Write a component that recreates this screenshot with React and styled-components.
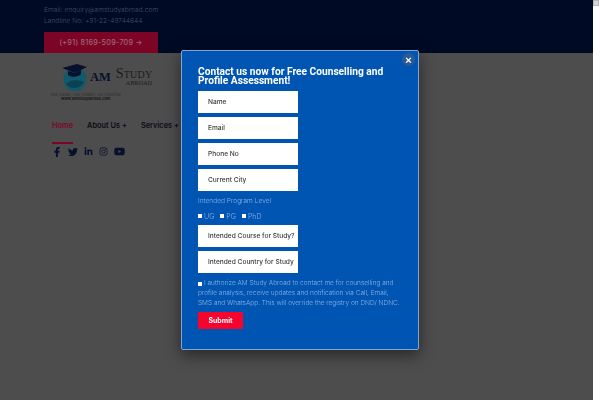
import styled, { createGlobalStyle } from 'styled-components';
import { FaFacebookF, FaTwitter, FaLinkedinIn, FaInstagram, FaYoutube } from 'react-icons/fa';

export default function App () {
  return (
    <>
      <GlobalStyle />
      <Page>
        <TopBar>
          <TopLine>Email: enquiry@amstudyabroad.com</TopLine>
          <TopLine>Landline No: +91-22-49744644</TopLine>
          <CallButton>(+91) 8169-509-709 →</CallButton>
        </TopBar>
        <SiteHeader>
          <Logo>
            <LogoRow>
              <svg width="26" height="29" viewBox="0 0 26 29">
                <circle cx="13" cy="16.5" r="11.5" fill="#0f5a6c" />
                <path d="M4 21c4-4 11-5 18-2-4 7-13 8-18 2z" fill="#0a4250" />
                <path d="M0 5l15-4 10 3-12 6z" fill="#07102c" />
                <path d="M6 8v4c4 3 10 2 13-1V7l-6 3z" fill="#07102c" />
              </svg>
              <LogoAm>AM</LogoAm>
              <LogoStudy>
                <span>Study</span>
                <small>Abroad</small>
              </LogoStudy>
            </LogoRow>
            <LogoTag>Your Career, Your Dreams, Our Expertise</LogoTag>
            <LogoUrl>www.amstudyabroad.com</LogoUrl>
          </Logo>
          <Nav>
            <NavItem $active>Home</NavItem>
            <NavItem>About Us +</NavItem>
            <NavItem>Services +</NavItem>
          </Nav>
          <Socials>
            <FaFacebookF size={10} />
            <FaTwitter size={10} />
            <FaLinkedinIn size={9} />
            <FaInstagram size={9} />
            <FaYoutube size={11} />
          </Socials>
        </SiteHeader>
      </Page>
      <Scrollbar><ScrollArrow /></Scrollbar>
      <Modal>
        <CloseButton>×</CloseButton>
        <Title>Contact us now for Free Counselling and Profile Assessment!</Title>
        <Form>
          <Field placeholder="Name" />
          <Field placeholder="Email" />
          <Field placeholder="Phone No" />
          <Field placeholder="Current City" />
          <Label>Intended Program Level</Label>
          <Checks>
            <Check><Box />UG</Check>
            <Check><Box />PG</Check>
            <Check><Box />PhD</Check>
          </Checks>
          <Field placeholder="Intended Course for Study?" />
          <Field placeholder="Intended Country for Study" />
          <Consent>
            <Box />I authorize AM Study Abroad to contact me for counselling and
            profile analysis, receive updates and notification via Call, Email, SMS
            and WhatsApp. This will override the registry on DND/ NDNC.
          </Consent>
          <Submit>Submit</Submit>
        </Form>
      </Modal>
    </>
  );
}

const GlobalStyle = createGlobalStyle`
  html, body {
    margin: 0;
    height: 400px;
    overflow: hidden;
    background: #ffffff;
  }

  * {
    box-sizing: border-box;
  }
`;

const Page = styled.main`
  width: 593px;
  height: 400px;
  background-color: #4d4d4d;
  font-family: "Inter", sans-serif;
`;

const TopBar = styled.header`
  height: 53px;
  padding: 5px 0 0 44px;
  background-color: #010a25;
`;

const TopLine = styled.p`
  margin: 0;
  height: 11px;
  font-size: 6.5px;
  font-weight: 300;
  line-height: 11px;
  letter-spacing: 0.1px;
  color: #474d66;
`;

const CallButton = styled.div`
  width: 114px;
  height: 21px;
  margin-top: 5px;
  font-size: 7.2px;
  font-weight: 500;
  line-height: 21px;
  letter-spacing: 0.25px;
  text-align: center;
  color: #a0667a;
  background-color: #7c0526;
`;

const SiteHeader = styled.div`
  padding: 9px 0 0 50px;
`;

const Logo = styled.div`
  width: 120px;
`;

const LogoRow = styled.div`
  display: flex;
  align-items: center;
  gap: 2px;
  height: 30px;
  padding-left: 12px;

  svg {
    flex: none;
  }
`;

const LogoAm = styled.span`
  font-family: "Liberation Serif", serif;
  font-size: 12.5px;
  font-weight: 700;
  color: #07102c;
`;

const LogoStudy = styled.div`
  display: flex;
  flex-direction: column;
  margin-left: 3px;
  font-family: "Liberation Serif", serif;
  font-variant: small-caps;
  font-size: 14px;
  line-height: 11px;
  letter-spacing: 0.2px;
  color: #1c1c1c;

  small {
    margin-top: 1px;
    font-size: 6px;
    line-height: 6px;
    text-align: right;
    text-transform: uppercase;
  }
`;

const LogoTag = styled.div`
  font-size: 3.7px;
  line-height: 5px;
  white-space: nowrap;
  color: #2d2d2d;
`;

const LogoUrl = styled.div`
  padding-left: 11px;
  font-size: 3.8px;
  font-weight: 700;
  line-height: 4px;
  color: #1a1a1a;
`;

const Nav = styled.nav`
  display: flex;
  gap: 14px;
  margin: 19px 0 0 2px;
`;

const NavItem = styled.a`
  font-family: "Inter", sans-serif;
  font-size: 7.4px;
  font-weight: 600;
  line-height: 12px;
  height: 24px;
  color: ${props => (props.$active ? '#7c0526' : '#0c0c14')};
  border-bottom: ${props => (props.$active ? '2px solid #7c0526' : 'none')};
`;

const Socials = styled.div`
  display: flex;
  align-items: center;
  gap: 6px;
  margin: 2px 0 0 2px;
  color: #07102c;
`;

const Scrollbar = styled.div`
  position: fixed;
  top: 0;
  right: 0;
  width: 7px;
  height: 400px;
  background-color: #ffffff;
`;

const ScrollArrow = styled.div`
  width: 6px;
  height: 6px;
  background-color: #d8d8d8;
  border: 1px solid #b8b8b8;
`;

const Modal = styled.section`
  position: fixed;
  top: 50px;
  left: 181px;
  width: 238px;
  height: 300px;
  padding: 16px 16px 0;
  background-color: #0055b3;
  border: 1px solid #7fa6d6;
  border-radius: 2px;
  box-shadow: 0 5px 15px rgba(0, 0, 0, 0.5);
  font-family: "Inter", sans-serif;
`;

const CloseButton = styled.button`
  position: absolute;
  top: 2px;
  right: 3px;
  width: 13px;
  height: 13px;
  padding: 0;
  border: none;
  border-radius: 50%;
  font-family: "Liberation Sans", sans-serif;
  font-size: 11px;
  font-weight: 700;
  line-height: 12px;
  color: #ffffff;
  background-color: #2c5a94;
`;

const Title = styled.h2`
  margin: 0 0 6px;
  font-family: "Roboto", sans-serif;
  font-size: 10.2px;
  font-weight: 700;
  line-height: 9px;
  color: #ffffff;
`;

const Form = styled.form`
  display: flex;
  flex-direction: column;
  align-items: flex-start;
`;

const Field = styled.input`
  flex: none;
  width: 100px;
  height: 22px;
  margin-bottom: 4px;
  padding: 0 0 0 10px;
  border: none;
  font-family: "Inter", sans-serif;
  font-size: 6.6px;
  font-weight: 500;
  background-color: #ffffff;

  &::placeholder {
    color: #3a3a3a;
    opacity: 1;
  }
`;

const Label = styled.div`
  margin-top: 1px;
  font-size: 6.6px;
  font-weight: 300;
  line-height: 10px;
  color: #8db3e2;
`;

const Checks = styled.div`
  display: flex;
  gap: 6px;
  height: 14px;
  margin: 3px 0 2px;
  align-items: center;
`;

const Check = styled.label`
  display: flex;
  align-items: center;
  font-size: 7px;
  font-weight: 300;
  color: #8db3e2;
`;

const Box = styled.span`
  display: inline-block;
  width: 4px;
  height: 4px;
  margin-right: 2px;
  vertical-align: -1px;
  background-color: #ffffff;
`;

const Consent = styled.p`
  width: 206px;
  margin: 1px 0 0;
  font-size: 6.5px;
  font-weight: 300;
  line-height: 10px;
  color: #8db3e2;
`;

const Submit = styled.button`
  width: 45px;
  height: 17px;
  margin-top: 4px;
  padding: 0;
  border: none;
  border-radius: 1px;
  font-family: "Inter", sans-serif;
  font-size: 7px;
  font-weight: 700;
  color: #ffffff;
  background-color: #f5052e;
`;
